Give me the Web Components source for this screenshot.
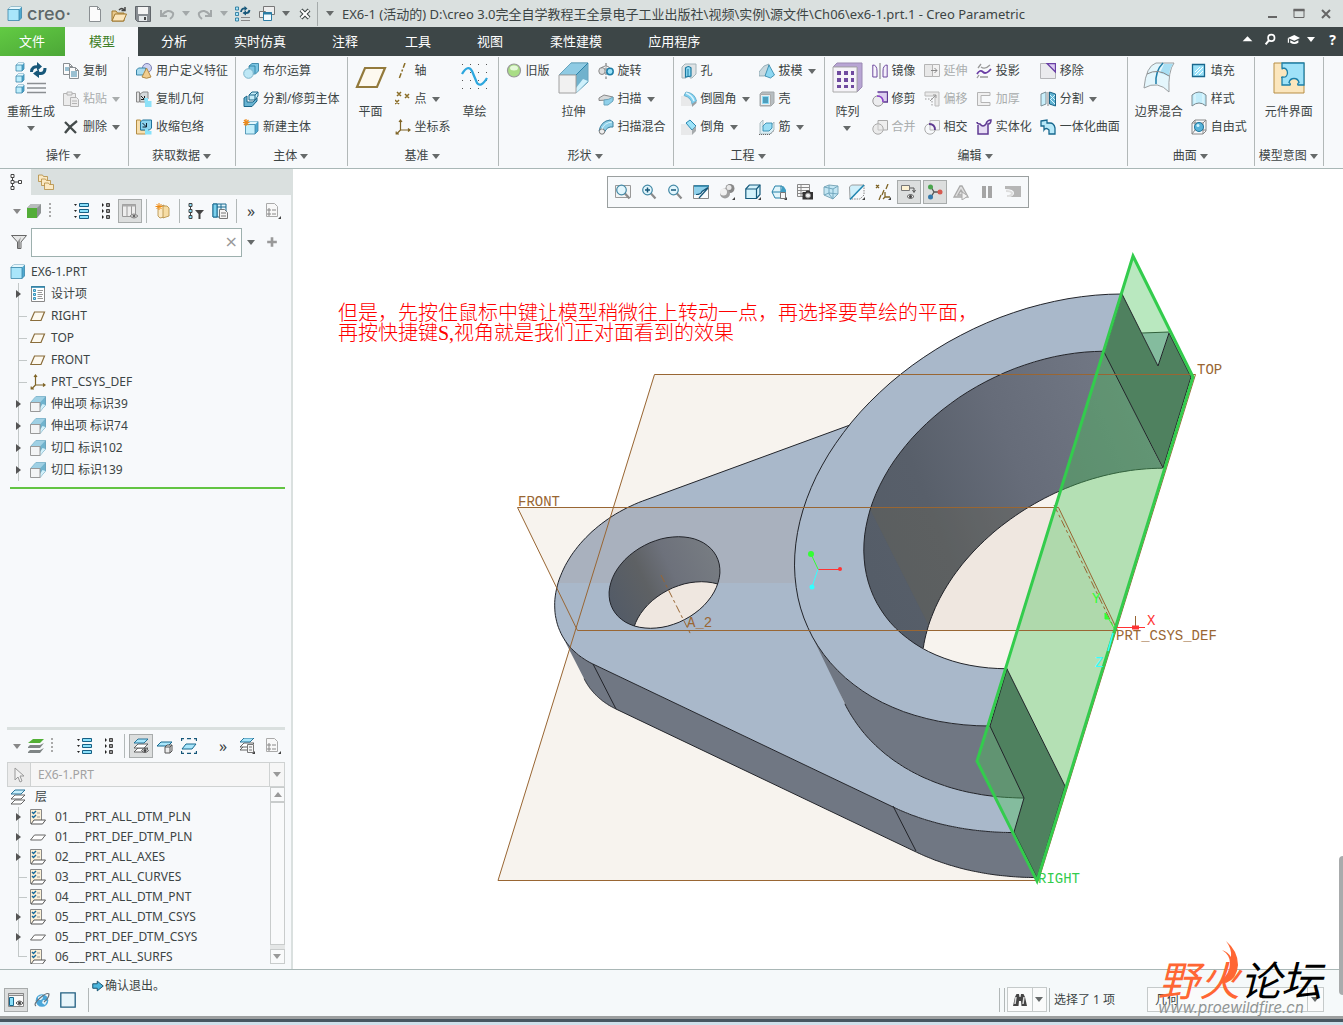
<!DOCTYPE html>
<html lang="zh-CN">
<head>
<meta charset="utf-8">
<title>EX6-1 - Creo Parametric</title>
<style>
  html, body {
    margin: 0;
    height: 100%;
  }

  body {
    font: 12px/16px "Noto Sans", "Noto Sans CJK SC", sans-serif;
    color: #3c4444;
    background: #fff;
    overflow: hidden;
  }
</style>
</head>
<body>
<creo-app></creo-app>

<script>
// small building blocks shared by several icons
const cube = (x, y, s, d, front = '#bdeefc', stroke = '#3a87aa') => `
  <path d="M${x} ${y + d}l${d} ${-d}h${s}v${s}l${-d} ${d}z" fill="#4fa9d0" stroke="${stroke}" stroke-width=".8"/>
  <path d="M${x} ${y + d}l${d} ${-d}h${s}l${-d} ${d}z" fill="#e6f8fd"/>
  <path d="M${x} ${y + d}h${s}v${s}h${-s}z" fill="${front}" stroke="${stroke}" stroke-width=".8"/>`;
const extrude = `
  <path d="M.5 6.500L6 .5H15.500V9L10 15.500V6.500z" fill="#6fb3ce" stroke="#5c98b2" stroke-width=".8"/>
  <path d="M6 .5h9.500L10 6.500H.5z" fill="#9fd0e4"/>
  <path d="M10 15.500L15.500 9l-3-1-2.500 4z" fill="#d2f1fb"/>
  <path d="M.5 6.500h9.500v9H.5z" fill="#f3f4f5" stroke="#999"/>`;
const sheet = (x, y, w, h) => `
  <path d="M${x} ${y}h${w - 3}l3 3v${h - 3}h${-w}z" fill="#fbfbfb" stroke="#8a8f92"/>
  <path d="M${x + w - 3} ${y}v3h3" fill="none" stroke="#8a8f92"/>`;
const layer = (y, fill, stroke) =>
  `<path d="M1 ${y + 4}l4-4h10l-4 4z" fill="${fill}" stroke="${stroke}" stroke-width=".9"/>`;
const csys = '<path d="M5.500 1v10H15M5.500 11L1.500 15M4 3l1.500-2L7 3M13 9.500l2 1.500-2 1.500M1.200 12.500V15H4" fill="none" stroke="#7f6426" stroke-width="1.200"/>';
const eye = (x, y) => `
  <path d="M${x} ${y}q3.500-4 7 0q-3.500 4-7 0z" fill="#f4f4f4" stroke="#555"/>
  <circle cx="${x + 3.500}" cy="${y}" r="1.500" fill="#444"/>`;
const corner = '<path d="M16 13v3h-3z" fill="#444"/>';
const magnifier = '<path d="M9.500 9l5 5.500" stroke="#8b8b8b" stroke-width="2.200"/><circle cx="6.500" cy="6" r="4.800" fill="#e2f6fd" stroke="#4489a6" stroke-width="1.200"/>';

const ICONS = {
  cube: cube(1, 1, 11, 2.500, '#a9e6fb'),
  new: sheet(2.500, .5, 11, 15),
  open: '<path d="M1 15V5h4l1.500 2H13v8z" fill="#e9c98d" stroke="#a0792f"/><path d="M1 15l3-7h11.500l-3 7z" fill="#fbe6bd" stroke="#a0792f"/><path d="M8 4q3-3 5 0M14 1v3.500h-3.500" fill="none" stroke="#444" stroke-width="1.500"/>',
  save: '<path d="M.5 .5h15v15H2.500l-2-2z" fill="#888d92" stroke="#61666b"/><path d="M3 1h10v7H3z" fill="#f4f4f4"/><path d="M4 10h8v5H4z" fill="#e4e8ea"/><path d="M9 11h2v3H9z" fill="#444"/>',
  undo: '<path d="M2 4v6h6" fill="none" stroke="#a3a8a9" stroke-width="2"/><path d="M3 9Q9 2 14 7q1 3-3 6" fill="none" stroke="#a3a8a9" stroke-width="2"/>',
  redo: '<path d="M14 4v6H8" fill="none" stroke="#a3a8a9" stroke-width="2"/><path d="M13 9Q7 2 2 7q-1 3 3 6" fill="none" stroke="#a3a8a9" stroke-width="2"/>',
  regen: `<g fill="#a9e6fb" stroke="#1a6f96" stroke-width=".8"><path d="M.5 1h3v3h-3zM.5 6.500h3v3h-3zM.5 12h3v3h-3z"/></g>
    <path d="M6 6Q6.500 2 10 2.500M14.500 4Q14 7.500 10 7" fill="none" stroke="#17587a" stroke-width="1.800"/><path d="M9.500 0v5l3-2.500zM11 4.500v5L7.500 7z" fill="#17587a"/>
    <path d="M6 11.500h9M6 14.500h9" stroke="#888" stroke-width="1.200"/>`,
  regenBig: `${cube(1, 1, 6, 2)}${cube(1, 12, 6, 2)}${cube(1, 23, 6, 2)}
    <path d="M16.500 10q0-6 7-5M30 6q0 7-7 5" fill="none" stroke="#17587a" stroke-width="3"/><path d="M22 0v9l5-4.500zM24 7v9l-6-4.500z" fill="#17587a"/>
    <path d="M12 21.500h19M12 26h19M12 30.500h19" stroke="#8b8f92" stroke-width="1.500"/>`,
  windows: '<path d="M4.500 .5h11v8h-11zM.5 5.500h6v6h-6z" fill="#eee" stroke="#777"/><path d="M4.500 6.500h8v8h-8z" fill="#f3fbff" stroke="#2b7ca4"/><path d="M4 7.500h9" stroke="#2b7ca4" stroke-width="2"/>',
  closeWin: '<path d="M4 4l8 8M12 4l-8 8" stroke="#3c4444" stroke-width="4"/><path d="M4.200 4.200l7.600 7.600M11.800 4.200l-7.600 7.600" stroke="#fff" stroke-width="2"/>',
  copy: `${sheet(.5, .5, 9, 11)}${sheet(6.500, 4.500, 9, 11)}<path d="M8 9h6M8 11h6M8 13h6M2 5h4M2 7h4" stroke="#3b86a8"/>`,
  paste: '<g fill="#ececec" stroke="#b4b4b4"><path d="M.5 2.500h12v12H.5z"/><path d="M4 1h5v3H4z"/><path d="M7.500 6.500h6l2 2v7h-8z"/></g><path d="M9 10h5M9 12.500h5" stroke="#b4b4b4"/>',
  delete: '<path d="M2 3l11 11M14 2Q7 7 2 14" fill="none" stroke="#444b4b" stroke-width="2.300"/>',
  udf: '<circle cx="11" cy="5" r="4.500" fill="#cfd3f2" stroke="#7b80b4"/><path d="M.5 7l2-2h7v7h-9z" fill="#a8dcf0" stroke="#3a85a8"/><path d="M6 14L10.500 5 15 14q-4.500 2.500-9 0z" fill="#f1cd8e" stroke="#b08a46"/>',
  copyGeom: '<path d="M.5 1h3v10h-3z" fill="#e3e3e3" stroke="#888"/><path d="M4 3l3-2h5v7L9 11H4z" fill="#d5dadc" stroke="#888"/><path d="M5 5l3 3M8.500 5v3.500H5" fill="none" stroke="#222"/><path d="M8 7h4v3h3.500v6H9v-3z" fill="#8de1f8"/>',
  shrink: '<path d="M.5 1h4v10h5v4h-9z" fill="#f7dfae" stroke="#b38c43"/><path d="M4.500 3l2-2h9v8l-2 2h-9z" fill="#8bd3ee" stroke="#1f7299"/><path d="M6.500 4l4 4M10.500 4v4h-4" fill="none" stroke="#123"/><path d="M9 10h3v2h3.500v3.500H9z" fill="#86e2fb"/>',
  boolean: '<path d="M6 3l3-2.500h6.500V8l-3 3H6z" fill="#7cc5e2" stroke="#27789d" stroke-width=".8"/><path d="M6 3h6v7" fill="none" stroke="#27789d" stroke-width=".8"/><circle cx="5.500" cy="10.500" r="4.800" fill="#bde7f5" stroke="#7db4ca"/>',
  splitBody: '<path d="M1 7l3-2v6h6l4-4v3l-5 5.500H1z" fill="#68b3d1" stroke="#1a6688"/><path d="M6 4l3-3h6v4l-3 4H6z" fill="#c6edf9" stroke="#1a6688"/><path d="M6 4h6v5M12 4l3-3" fill="none" stroke="#1a6688"/>',
  newBody: `${cube(2.500, 2.500, 9.500, 3, '#c4effb')}<path d="M3 0v7M0 3.500h6.500M1 1l4.500 5M5.500 1L1 6" stroke="#ec8b1d" stroke-width="1.200"/>`,
  plane: '<path d="M.8 12.500L4.500 4h10L11 12.500z" fill="#fdf9ef" stroke="#8a6d3b" stroke-width="1.200"/>',
  planeBig: '<path d="M2 25L10 6h20l-8 19z" fill="#fdf9ef" stroke="#937a3c" stroke-width="2.200"/>',
  axis: '<path d="M10 0L4 16" stroke="#8a6d26" stroke-width="1.500" stroke-dasharray="5 2 2 2"/>',
  point: '<path d="M2 1l4 4M6 1L2 5M10 3l4 4M14 3l-4 4M0 9l4 4M4 9l-4 4" stroke="#8a6d26" stroke-width="1.500"/>',
  csys,
  sketchBig: '<g fill="#555"><path d="M3 2h1v1H3zM11 2h1v1h-1zM19 2h1v1h-1zM27 2h1v1h-1zM3 10h1v1H3zM11 10h1v1h-1zM19 10h1v1h-1zM27 10h1v1h-1zM3 18h1v1H3zM11 18h1v1h-1zM19 18h1v1h-1zM27 18h1v1h-1zM3 26h1v1H3zM11 26h1v1h-1zM19 26h1v1h-1zM27 26h1v1h-1z"/></g><path d="M3 12Q9 2 13 9L18 21q4 5 10-5" fill="none" stroke="#2da7de" stroke-width="2.300"/>',
  legacy: '<circle cx="8" cy="7.500" r="6.500" fill="#a9dd86" stroke="#999" stroke-width="1.200"/><ellipse cx="8" cy="5" rx="4" ry="2.500" fill="#e4f8d8"/>',
  extrude,
  extrudeBig: '<path d="M1 13L13 1h17v19L18 31V13z" fill="#70b2cd" stroke="#6aa5bd"/><path d="M13 1h17L18 13H1z" fill="#8fcbe4" stroke="#6aa5bd"/><path d="M18 31L30 19l-5-2-7 9z" fill="#cff1fc"/><path d="M1 13h17v18H1z" fill="#f1f1f1" stroke="#a0a0a0"/><path d="M18 13L30 1" stroke="#2b83aa"/>',
  revolve: '<path d="M8 0v16" stroke="#666" stroke-dasharray="3 1.500"/><ellipse cx="4" cy="8" rx="3.200" ry="3.500" fill="#ddd" stroke="#888"/><circle cx="12" cy="8.500" r="3.200" fill="#9be3fa" stroke="#1f7da6" stroke-width="1.500"/><path d="M3 5q5-4 9 0" fill="none" stroke="#888"/>',
  sweep: '<path d="M1 7l5-3 9 2v3l-6 3V9L1 9.500z" fill="#d6d9da" stroke="#888"/><path d="M6 9q5 0 9-3v4l-5 4H6z" fill="#8fd0ea" stroke="#6aa5bd"/>',
  sweepBlend: '<path d="M1 12Q3 2 12 1l3 2v5Q9 7 6 14z" fill="#8ecfe8" stroke="#3a7e9d"/><circle cx="4" cy="12.500" r="2.700" fill="#eee" stroke="#777"/><path d="M4 10Q6 4 14 3" fill="none" stroke="#d9f5fd"/>',
  hole: '<path d="M1 4l3-3h11v10l-4 4H9V7H5v8H1z" fill="#dfe3e5" stroke="#a3b4ba"/><path d="M4.500 14V5q3-3 5.500 0v8z" fill="#8edbf5" stroke="#1b789f" stroke-width="1.200"/><path d="M7 6v8" stroke="#1b789f"/>',
  round: '<path d="M0 5h7q4 3 4 10H0z" fill="#e8e9ea"/><path d="M5 1q9 1 10.500 9L11 13.500Q11 7 3 4.500z" fill="#7ecff0" stroke="#5ba6c4" stroke-width=".8"/><path d="M5 2q6 2 8 8" fill="none" stroke="#dff6fd" stroke-width="1.500"/><path d="M11 13v3l4.500-4v-2z" fill="#9a9fa2"/>',
  chamfer: '<path d="M0 5h5l6 6v5H0z" fill="#e8e9ea"/><path d="M5 4l4-3 6 6-4 4z" fill="#9de3f9" stroke="#2887b1"/><path d="M11 11v5l4-4V7z" fill="#a7abad"/>',
  draft: '<path d="M0 9l5-6 5-2v11l-5 1H0z" fill="#c8d9df" stroke="#7a99a5" stroke-width=".7"/><path d="M6 13l4-11 5.500 10-4 3z" fill="#8cd7f2" stroke="#2a81a6" stroke-width=".8"/>',
  shell: '<path d="M1 3l2-2h12v11l-3 3H1z" fill="#b7bdc0" stroke="#a3a8aa"/><path d="M1.500 3.500h10v11h-10z" fill="#ebedee" stroke="#aaa"/><path d="M3.500 5.500h6v7h-6z" fill="#4e9ebd" stroke="#8edbf5"/>',
  rib: '<path d="M1 4l3-3v7h7l4-5v8l-4 4H1z" fill="#dceef4" stroke="#9fb0b6" stroke-width=".8"/><path d="M4 7l3-3h6v5l-3 3H4z" fill="#9adef5" stroke="#2580a7" stroke-width=".8"/><path d="M0 15.500h11l4-4" fill="none" stroke="#666" stroke-dasharray="1 1"/>',
  patternBig: '<path d="M1 5l4-4h25v24l-5 5V5z" fill="#b8a5d4" stroke="#9b8ab3"/><path d="M1 5h24v25H1z" fill="#f5f3f8" stroke="#aaa"/><g fill="#6f4a9f"><path d="M5 9h4v4H5zM12 9h4v4h-4zM19 9h3v4h-3zM5 16h4v4H5zM12 16h4v4h-4zM19 16h3v4h-3zM5 23h4v3H5zM12 23h4v3h-4zM19 23h3v3h-3z"/></g>',
  mirror: '<path d="M8 0v16" stroke="#777"/><path d="M.8 2q4.200 0 4.200 6v6H.8z" fill="#f8f5fc" stroke="#6f4a9f"/><path d="M15.200 2Q11 2 11 8v6h4.200z" fill="#f4effb" stroke="#6f4a9f"/>',
  trim: '<path d="M5.500 1h10v10H10" fill="#ddd0f0" stroke="#5f3a92" stroke-width="1.300"/><circle cx="6" cy="10" r="5.200" fill="#ececee" stroke="#999"/><path d="M5 5q6 0 6 6" fill="none" stroke="#8b3fd0" stroke-width="1.500"/>',
  merge: '<path d="M6 1.500h9.500V11H6z" fill="#eee" stroke="#aaa"/><circle cx="6" cy="10" r="5.200" fill="#ebebeb" stroke="#aaa"/><path d="M6 11V5M6 11h5" stroke="#c4c4c4"/>',
  extend: '<path d="M.5 1.500h8v12h-8z" fill="#e8e8e8" stroke="#b5b5b5"/><path d="M8.500 1.500h7v12h-7z" fill="#f2f2f2" stroke="#b5b5b5"/><path d="M7 7.500h6M10.500 5L13 7.500 10.500 10" fill="none" stroke="#888"/>',
  offset: '<path d="M1 1h14v14h-4V5H1z" fill="#e9e9e9" stroke="#bbb"/><path d="M1 8h7v8" fill="none" stroke="#999" stroke-dasharray="1.500 1.500"/><path d="M6 10l6-6M9 4h3v3" fill="none" stroke="#999"/>',
  intersect: '<path d="M6 1.500h9.500V11H6z" fill="#f4f4f5" stroke="#bbb"/><circle cx="6" cy="10" r="5.200" fill="none" stroke="#aaa"/><path d="M5 5q6 0 6 6" fill="none" stroke="#5f3a92" stroke-width="1.800"/>',
  project: '<path d="M2 5l3-4M5 4q4 3 9-2" fill="none" stroke="#999" stroke-width="1.300"/><path d="M1 11q3-5 6-2t8-3" fill="none" stroke="#6b3fa5" stroke-width="1.800"/><path d="M1 15l2-3M4 14h8" fill="none" stroke="#999" stroke-width="1.300"/>',
  thicken: '<path d="M1.500 1.500H14v3H5v7h9v3H1.500z" fill="#f0f0f0" stroke="#b4b4b4"/>',
  solidify: '<path d="M2 6v9h10V5q3 0 3-4-4 0-5 4-3 4-6 0-3 0-3-2" fill="#e7ddf4" stroke="#5f3a92" stroke-width="1.500"/>',
  remove: '<path d="M.5 .5h15v15H.5z" fill="#ebebee" stroke="#b5b5b8"/><path d="M7 .5h8.500V9z" fill="#d9c9f0" stroke="#6a3fa5" stroke-width="1.300"/>',
  split: '<path d="M1 3l5-2v12l-5 2z" fill="#c9effb" stroke="#7a8f97"/><path d="M8 1v14" stroke="#888"/><path d="M9.500 1l6 2v12l-6-2z" fill="#5fb3d3" stroke="#1c6486"/><path d="M10 4l5 5M10 8l5 5M15 4l-5 5" stroke="#d8f4fc"/>',
  unified: '<path d="M1 2l6-1v3h3q4 0 5 5v6H9v-4q-3-3-5 0v-4H1z" fill="#b7e9f9" stroke="#17688e" stroke-width="1.300"/>',
  boundaryBig: '<path d="M1 26Q3 4 13 1h18Q25 9 26 30 15 18 1 26z" fill="#e4f6fc" stroke="#9a9fa1"/><path d="M21 2h9q-4 6-4 12l-9-3z" fill="#a8dff4"/><path d="M20 1Q12 9 13 22" fill="none" stroke="#1f7ea8" stroke-width="1.500"/><path d="M4 12q11-6 22 2" fill="none" stroke="#888"/>',
  fill: '<path d="M1.500 1.500h12v12h-12z" fill="#9be2f9" stroke="#19678d" stroke-width="1.300"/><path d="M4 9l5-5M4 12l8-8M8 12l4-4" stroke="#fff"/>',
  style: '<path d="M1 4q7-6 14 0v11q-7-6-14 0z" fill="#c2edfb" stroke="#7b898f"/><path d="M4 3v9M12 3v9" stroke="#e9fafe"/>',
  freestyle: '<path d="M1 4l3-3h11v11l-3 3H1zM1 4h11v11M12 4l3-3M4 1v10l-3 4M4 11h11" fill="none" stroke="#888"/><circle cx="8" cy="8" r="4.500" fill="#58b3d9" stroke="#1e789f"/><circle cx="7" cy="6.500" r="1.500" fill="#d3f3fd"/>',
  interfaceBig: '<path d="M1 1h30v30H1z" fill="#fbe6bd" stroke="#b78e45"/><path d="M9 1h22v22h-6q-1-1 1-2.500-1-4-5-4t-5 4q2 1.500 1 2.500H9v-7q-1-1 .5-1 4.500 1 5-4 0-5-5-5Q9 8 9 6z" fill="#9fe2f8" stroke="#1b7fa9" stroke-width="1.300"/>',
  treeTab: '<path d="M3.500 3v10M3.500 8h7" stroke="#444"/><g fill="#fff" stroke="#444"><path d="M2 .5h3v3H2zM2 6.500h3v3H2zM2 12.500h3v3H2zM9.500 6.500h3v3h-3z"/></g>',
  folders: '<g fill="#fbe9c4" stroke="#b28a3f" stroke-width=".8"><path d="M.5 1h4l1 1.500h4v5h-9z"/><path d="M3.500 5h4l1 1.500h4v5h-9z"/><path d="M6.500 9h4l1 1.500h4v5h-9z"/></g>',
  cubeGreen: '<path d="M1 5l4-4h10v9l-4 5V5z" fill="#8d9292"/><path d="M1 5l4-4h10l-4 4z" fill="#b8bcbc"/><path d="M1 5h10v10H1z" fill="#53ad38"/>',
  layersGreen: '<path d="M0 5l5-4h11l-4 4z" fill="#52b035"/><path d="M0 9l2-2h10l4-2-4 5H0zM0 14l2-2h10l4-2-4 5H0z" fill="#7f8585"/>',
  dots: '<path d="M7 0h2v2H7zM7 4h2v2H7zM7 8h2v2H7zM7 12h2v2H7z" fill="#aaa"/>',
  expandAll: '<g fill="#8be0fa" stroke="#165f84"><path d="M5.500 .5h9v3h-9zM5.500 6.500h9v3h-9zM5.500 12.500h9v3h-9z"/></g><path d="M0 1h3L1.500 3zM0 7h3L1.500 9zM0 13h3l-1.500 2z" fill="#222"/>',
  collapseAll: '<g fill="#999" stroke="#444"><path d="M8.500 .5h3v3h-3zM8.500 6.500h3v3h-3zM8.500 12.500h3v3h-3z"/></g><path d="M4 0v4l2-2zM4 6v4l2-2zM4 12v4l2-2z" fill="#222"/>',
  columns: '<path d="M.5 1.500h13v12H.5zM5 1v12M9.500 1v12" fill="#ededed" stroke="#999"/><path d="M.5 1.500h13v2H.5z" fill="#aaa"/><path d="M8 13q3.500-4 8 0-4 4-8 0z" fill="#ccc" stroke="#888"/><circle cx="12" cy="13" r="1.300" fill="#666"/>',
  newPart: '<path d="M3 4l6-2v12l-4 1-2-2z" fill="#fbe9c4" stroke="#b28a3f" stroke-width=".8"/><path d="M8 3q5-1 6 2v8l-6 2z" fill="#f6dca4" stroke="#b28a3f" stroke-width=".8"/><path d="M4 0v7M.5 3.500h7M1.500 1l5 5M6.500 1l-5 5" stroke="#ef8a12"/>',
  treeFilter: '<path d="M2.500 3v10" stroke="#444"/><g fill="#8be0fa" stroke="#444"><path d="M1 .5h3v3H1zM1 6.500h3v3H1zM1 12.500h3v3H1z"/></g><path d="M7 7h9l-3.500 4v5h-2v-5z" fill="#444"/>',
  treeColumns: '<path d="M1 1h13v13H1zM5 1v13M1 4h13M9 1v5" fill="#e4f6fc" stroke="#1a6b90"/><path d="M1 1h4v13H1z" fill="#7bd0ec" stroke="#1a6b90"/><path d="M7.500 6.500h5l3 3v6h-8z" fill="#f5f5f5" stroke="#777"/><path d="M9 10h5M9 13h5" stroke="#777"/>',
  settings: `<path d="M1.500 .5h8l3 3v10h-11z" fill="#f8f8f8" stroke="#aaa"/><path d="M3 6h2v2H3zM3 10h2v2H3zM7 7h4M7 11h4" fill="none" stroke="#888"/>${corner}`,
  funnel: '<path d="M.5 1.500h15L10 8v6.500H6.500V8z" fill="#e6e7e7" stroke="#666"/><path d="M10 3l-3 4v7l2 0V7z" fill="#999"/>',
  plus: '<path d="M8 2.500v11M2.500 8h11" stroke="#999" stroke-width="3"/>',
  designItems: '<path d="M1.500 .5h13v15h-13z" fill="#fff" stroke="#888"/><path d="M1 1h14" stroke="#1d7fab" stroke-width="1.500"/><g fill="#8be0fa" stroke="#1a7ca8" stroke-width=".8"><path d="M3.500 3.500h2v2h-2zM3.500 7.500h2v2h-2zM3.500 11.500h2v2h-2z"/></g><path d="M7.500 4.500H13M7.500 6.500H12M7.500 8.500H13M7.500 10.500H12M7.500 12.500H13" stroke="#999"/>',
  layers: layer(11, '#fff', '#555') + layer(6, '#fff', '#555') + layer(1, '#c8effc', '#17688e'),
  layerRule: '<path d="M.5 .5h11v14H.5z" fill="#fbf1d8" stroke="#888"/><path d="M2 3l1.500 1.500L6 2M2 7l1.500 1.500L6 6" fill="none" stroke="#14689b" stroke-width="1.400"/><path d="M7 4h3M7 8h3" stroke="#999"/><path d="M1 15l3-4h11.500l-3 4z" fill="#fff" stroke="#555"/>',
  layerPlain: '<path d="M.5 11l4-5h11l-4 5z" fill="#fff" stroke="#666"/>',
  layersEye: `${layer(10, '#fff', '#555')}${layer(6, '#fff', '#555')}${layer(1, '#a9e6fb', '#17688e')}${eye(8.500, 12.500)}`,
  layerCube: '<path d="M0 8l4-4h11l-4 4z" fill="#a9e6fb" stroke="#17688e"/><path d="M8 9l2-2h5v6l-2 2H8zM8 9h5v6M13 9l2-2" fill="#ececec" stroke="#555"/>',
  layerSelect: '<path d="M.5 3V.5H3M6 .5h4M13 .5h2.500V3M.5 13v2.500H3M6 15.500h4M13 15.500h2.500V13" fill="none" stroke="#17587a" stroke-width="1.300"/><path d="M1 11l4-5h10l-4 5z" fill="#a9e6fb" stroke="#17688e"/>',
  layerMenu: `${layer(8, '#fff', '#555')}${layer(5, '#fff', '#555')}${layer(0, '#a9e6fb', '#17688e')}<path d="M8.500 6.500h6v8h-6z" fill="#f6f6f6" stroke="#777"/><path d="M10 9h3M10 12h3" stroke="#777"/>${corner}`,
  pointer: '<path d="M4 1v12l3-3 2 5 2-1-2-5h4z" fill="#f2f2f2" stroke="#999"/>',
  zoomFit: `<path d="M.5 1.500h15v12H.5z" fill="#f3f4f4" stroke="#999"/>${magnifier}`,
  zoomIn: `${magnifier}<path d="M6.500 3.500v5M4 6h5" stroke="#17587a" stroke-width="1.500"/>`,
  zoomOut: `${magnifier}<path d="M4 6h5" stroke="#17587a" stroke-width="1.500"/>`,
  repaint: '<path d="M.5 1.500h15v13H.5z" fill="#8fd0ea" stroke="#888"/><path d="M1 14v-3q6 0 8-3l6-4v10z" fill="#fafcfd"/><path d="M3 10.500q5 0 6-3l6-4M6 14l9-10" fill="none" stroke="#17587a" stroke-width="1.200"/><path d="M1 2h15" stroke="#2580a7" stroke-width="1.500"/>',
  shading: `<circle cx="11" cy="4.500" r="4.500" fill="#888"/><circle cx="6" cy="9.500" r="5" fill="#a0a0a0"/><circle cx="4.500" cy="8" r="3.500" fill="#f1f1f1"/><circle cx="10" cy="3.500" r="2.500" fill="#e8e8e8"/>${corner}`,
  displayStyle: `<path d="M.8 5l3.500-4H15v9.500l-3.500 4H.8z" fill="#d5f3fc" stroke="#175b7d" stroke-width="1.200"/><path d="M.8 5h10.700v9.500M11.500 5L15 1" fill="none" stroke="#175b7d" stroke-width="1.200"/>${corner}`,
  savedViews: `<path d="M1 8l3-6h7l3 6-3 6H4z" fill="#e1f5fb" stroke="#2580a7"/><path d="M1 8h9V2" fill="none" stroke="#2580a7"/><path d="M10 6l2.500-4L15 6v3h-5z" fill="#3f9ec4"/><path d="M9.500 8.500h5v6h-5z" fill="#f6f6f6" stroke="#777"/>${corner}`,
  viewManager: '<path d="M.5 .5h12v12H.5zM.5 3.500h12M.5 6.500h12M.5 9.500h12M4 .5v12" fill="#f7f7f7" stroke="#888"/><path d="M5.500 8h3l1-1.500h3L13.500 8H16v7.500H5.500z" fill="#333"/><circle cx="11" cy="11.500" r="2.500" fill="#eee" stroke="#888"/>',
  perspective: '<path d="M1 3l5-2 9 1v8l-5 5-9-4z" fill="#c3e6f3" stroke="#7fa9ba"/><path d="M1 3l9 2 5-3M10 5v10M6 1v9l4 5M1 11l5-2 9 1" fill="none" stroke="#73a8bf"/>',
  section: `<path d="M.5 3l2-2H15L1 15z" fill="#d0effa" stroke="#888" stroke-width=".8"/><path d="M15 1v10l-4 4H2" fill="none" stroke="#888" stroke-dasharray="1.500 1"/><path d="M15 1L1 15.500" stroke="#1f86b1" stroke-width="1.500"/>${corner}`,
  datumDisplay: `<path d="M1 1l3 3M4 1L1 4M13 0l-2 5M9 6l-2 5M6 11l-2 5M10 8v5h5M8 15l2-2" fill="none" stroke="#7f6426" stroke-width="1.300"/>${corner}`,
  annotations: `<path d="M.5 1.500h8v5h-8z" fill="#fdf2d3" stroke="#777"/><path d="M9 4h4v4M11.500 6l1.500 2.500L14.500 6" fill="none" stroke="#555"/>${eye(6, 12.500)}`,
  spinCenter: '<path d="M4 3l3 5-3 5M7 8h6" fill="none" stroke="#555" stroke-width="1.300"/><circle cx="3.500" cy="3" r="2.500" fill="#4aa54e"/><circle cx="13" cy="8" r="2.500" fill="#d65a50"/><circle cx="3.500" cy="13" r="2.500" fill="#3579ab"/>',
  simulate: '<path d="M1 13L7 2l2 0 6 11zM5 11l3-5 3 5z" fill="#e0e0e0" stroke="#aaa" stroke-width="1.300"/><path d="M9 8l6 4-6 4z" fill="#f3f3f3" stroke="#aaa"/>',
  pause: '<path d="M3 2h4v12H3zM9 2h4v12H9z" fill="#a5a5a5"/>',
  analysis: '<path d="M0 2h16v11H4q5-1 5-4 0-4-9-4z" fill="#b6b6b6"/><path d="M2 12q5 0 5-3-1-2-6-2" fill="none" stroke="#ddd" stroke-width="2"/>',
  navPane: `<path d="M.5 1.500h15v13H.5z" fill="#fafafa" stroke="#888"/><path d="M.5 1.500h15v2H.5z" fill="#ddd" stroke="#888"/><path d="M1.500 5.500h4v8h-4z" fill="#8be0fa" stroke="#17688e"/>${eye(8, 11)}`,
  browser: '<circle cx="8" cy="8.500" r="6.300" fill="#4aa6d8"/><path d="M4 5l4-2 1 3-2 2-3 0zM9 8l4 1-2 4-3-2z" fill="#e4f5fb"/><path d="M2 14Q-1 12 6 6t9-4q0 4-5 8" fill="none" stroke="#6a7278" stroke-width="1.200"/>',
  fullScreen: '<path d="M.8 .8h14.400v14.400H.8z" fill="#e7f5fa" stroke="#205f80" stroke-width="1.300"/>',
  message: '<path d="M1 5h6V1.500L15 8l-8 6.500V11H1z" fill="#4cb6dd" stroke="#16506d" stroke-width="1.300"/>',
  binoculars: '<path d="M1 14l2-9 1.500-3H7l.5 3h1L9 2h2.500L13 5l2 9h-5.500L9 9H7l-.5 5z" fill="#444"/><path d="M4 5l-1 7M12 5l-1 7" stroke="#ddd" stroke-width="1.500"/>',
  chevronUp: '<path d="M2 10l6-6 6 6z" fill="#fff"/>',
  search: '<circle cx="9" cy="6" r="4" fill="none" stroke="#fff" stroke-width="2"/><path d="M6 9l-4 5" stroke="#fff" stroke-width="2.500"/>',
  learn: '<path d="M1 6l8-3.500L16 6 9 9.500z" fill="#fff"/><path d="M4 9v3q5 3 10 0V9L9 11.500zM1 6.500h1.500V12H1z" fill="#fff"/>',
  minimize: '<path d="M4 11h9" stroke="#666" stroke-width="2"/>',
  maximize: '<path d="M3 3.500h10v8H3z" fill="none" stroke="#666"/><path d="M2.500 4h11" stroke="#666" stroke-width="2.500"/>',
  close: '<path d="M4 4l8 8M12 4l-8 8" stroke="#666" stroke-width="2"/>'
};

class BaseElement extends HTMLElement {
  connectedCallback() {
    if (!this.shadowRoot) {
      this.attachShadow({ mode: 'open' });
      this.shadowRoot.innerHTML = this.render();
    }
  }
}

class CreoIcon extends BaseElement {
  render() {
    const name = this.getAttribute('name');
    const box = name.endsWith('Big') ? 32 : 16;
    return `
      <style>
        :host { display: block; flex: none; width: ${box}px; height: ${box}px; }
        svg { display: block; width: 100%; height: 100%; }
      </style>
      <svg viewBox="0 0 ${box} ${box}" aria-hidden="true">${ICONS[name]}</svg>
    `;
  }
}

class CaretMark extends BaseElement {
  render() {
    return `
      <style>
        :host { display: block; flex: none; width: 9px; height: 5px; color: #666a6a; }
        div { border: 4px solid transparent; border-top: 5px solid currentColor; border-bottom: 0; width: 0; }
      </style>
      <div></div>
    `;
  }
}

// Icon-only button used by every toolbar
class IconButton extends BaseElement {
  render() {
    return `
      <style>
        :host { display: block; flex: none; width: var(--button-width, 24px); }
        button {
          display: flex;
          align-items: center;
          justify-content: center;
          box-sizing: border-box;
          width: 100%;
          height: 24px;
          padding: 0;
          border: 1px solid transparent;
          background: none;
        }
        :host([pressed]) button { background: #dcdede; border-color: #a8acac; }
      </style>
      <button type="button" aria-label="${this.getAttribute('icon')}"><creo-icon name="${this.getAttribute('icon')}"></creo-icon></button>
    `;
  }
}

class RibbonButton extends BaseElement {
  render() {
    const menu = this.hasAttribute('menu') ? '<caret-mark></caret-mark>' : '';
    return `
      <style>
        :host { display: block; }
        button {
          display: flex;
          align-items: center;
          height: 28px;
          padding: 0;
          border: 0;
          background: none;
          color: inherit;
          font: inherit;
          white-space: nowrap;
        }
        creo-icon { margin-right: 4px; }
        caret-mark { margin-left: 5px; }
        button:disabled, button:disabled caret-mark { color: #a9adad; }
        :host([big]) button {
          flex-direction: column;
          min-width: 32px;
          height: 84px;
          padding-top: 5px;
        }
        :host([big]) creo-icon { margin: 0 0 10px; }
        :host([big]) caret-mark { margin: 6px 0 0; }
      </style>
      <button type="button" ${this.hasAttribute('disabled') ? 'disabled' : ''}>
        <creo-icon name="${this.getAttribute('icon')}"></creo-icon><span><slot></slot></span>${menu}
      </button>
    `;
  }
}

class RibbonColumn extends BaseElement {
  render() {
    return `
      <style>:host { display: flex; flex-direction: column; }</style>
      <slot></slot>
    `;
  }
}

class RibbonGroup extends BaseElement {
  render() {
    return `
      <style>
        :host { display: flex; flex: none; flex-direction: column; margin: 1px 0 2px; border-right: 1px solid #b2b8b8; }
        .body { display: flex; justify-content: center; gap: 8px; height: 84px; padding: 0 7px; }
        .label {
          display: flex;
          align-items: center;
          justify-content: center;
          gap: 3px;
          height: 16px;
          margin-top: 7px;
          padding: 0 4px;
          border: 0;
          background: none;
          color: inherit;
          font: inherit;
        }
      </style>
      <div class="body"><slot></slot></div>
      <button type="button" class="label">${this.getAttribute('label')}<caret-mark></caret-mark></button>
    `;
  }
}

class CreoRibbon extends BaseElement {
  render() {
    return `
      <style>
        :host {
          display: flex;
          flex: none;
          box-sizing: border-box;
          height: 113px;
          border-bottom: 1px solid #a9b7b6;
          background: #f7f9fb;
        }
      </style>
      <ribbon-group label="操作">
        <ribbon-button big menu icon="regenBig">重新生成</ribbon-button>
        <ribbon-column>
          <ribbon-button icon="copy">复制</ribbon-button>
          <ribbon-button icon="paste" menu disabled>粘贴</ribbon-button>
          <ribbon-button icon="delete" menu>删除</ribbon-button>
        </ribbon-column>
      </ribbon-group>
      <ribbon-group label="获取数据">
        <ribbon-column>
          <ribbon-button icon="udf">用户定义特征</ribbon-button>
          <ribbon-button icon="copyGeom">复制几何</ribbon-button>
          <ribbon-button icon="shrink">收缩包络</ribbon-button>
        </ribbon-column>
      </ribbon-group>
      <ribbon-group label="主体">
        <ribbon-column>
          <ribbon-button icon="boolean">布尔运算</ribbon-button>
          <ribbon-button icon="splitBody">分割/修剪主体</ribbon-button>
          <ribbon-button icon="newBody">新建主体</ribbon-button>
        </ribbon-column>
      </ribbon-group>
      <ribbon-group label="基准">
        <ribbon-button big icon="planeBig">平面</ribbon-button>
        <ribbon-column>
          <ribbon-button icon="axis">轴</ribbon-button>
          <ribbon-button icon="point" menu>点</ribbon-button>
          <ribbon-button icon="csys">坐标系</ribbon-button>
        </ribbon-column>
        <ribbon-button big icon="sketchBig">草绘</ribbon-button>
      </ribbon-group>
      <ribbon-group label="形状">
        <ribbon-column>
          <ribbon-button icon="legacy">旧版</ribbon-button>
        </ribbon-column>
        <ribbon-button big icon="extrudeBig">拉伸</ribbon-button>
        <ribbon-column>
          <ribbon-button icon="revolve">旋转</ribbon-button>
          <ribbon-button icon="sweep" menu>扫描</ribbon-button>
          <ribbon-button icon="sweepBlend">扫描混合</ribbon-button>
        </ribbon-column>
      </ribbon-group>
      <ribbon-group label="工程">
        <ribbon-column>
          <ribbon-button icon="hole">孔</ribbon-button>
          <ribbon-button icon="round" menu>倒圆角</ribbon-button>
          <ribbon-button icon="chamfer" menu>倒角</ribbon-button>
        </ribbon-column>
        <ribbon-column>
          <ribbon-button icon="draft" menu>拔模</ribbon-button>
          <ribbon-button icon="shell">壳</ribbon-button>
          <ribbon-button icon="rib" menu>筋</ribbon-button>
        </ribbon-column>
      </ribbon-group>
      <ribbon-group label="编辑">
        <ribbon-button big menu icon="patternBig">阵列</ribbon-button>
        <ribbon-column>
          <ribbon-button icon="mirror">镜像</ribbon-button>
          <ribbon-button icon="trim">修剪</ribbon-button>
          <ribbon-button icon="merge" disabled>合并</ribbon-button>
        </ribbon-column>
        <ribbon-column>
          <ribbon-button icon="extend" disabled>延伸</ribbon-button>
          <ribbon-button icon="offset" disabled>偏移</ribbon-button>
          <ribbon-button icon="intersect">相交</ribbon-button>
        </ribbon-column>
        <ribbon-column>
          <ribbon-button icon="project">投影</ribbon-button>
          <ribbon-button icon="thicken" disabled>加厚</ribbon-button>
          <ribbon-button icon="solidify">实体化</ribbon-button>
        </ribbon-column>
        <ribbon-column>
          <ribbon-button icon="remove">移除</ribbon-button>
          <ribbon-button icon="split" menu>分割</ribbon-button>
          <ribbon-button icon="unified">一体化曲面</ribbon-button>
        </ribbon-column>
      </ribbon-group>
      <ribbon-group label="曲面">
        <ribbon-button big icon="boundaryBig">边界混合</ribbon-button>
        <ribbon-column>
          <ribbon-button icon="fill">填充</ribbon-button>
          <ribbon-button icon="style">样式</ribbon-button>
          <ribbon-button icon="freestyle">自由式</ribbon-button>
        </ribbon-column>
      </ribbon-group>
      <ribbon-group label="模型意图">
        <ribbon-button big icon="interfaceBig">元件界面</ribbon-button>
      </ribbon-group>
    `;
  }
}

class TitleBar extends BaseElement {
  render() {
    return `
      <style>
        :host {
          display: flex;
          flex: none;
          align-items: center;
          height: 27px;
          padding: 0 9px 0 7px;
          background: #dae0df;
        }
        .logo { margin-left: 4px; font: 500 18px/24px Inter, sans-serif; width: 60px; color: #5e686a; }
        .quick { display: flex; align-items: center; gap: 8px; }
        .quick caret-mark { width: 7px; margin-left: -1px; }
        .quick .off { color: #a3a8a9; }
        .sep { width: 1px; height: 24px; margin: 0 8px 0 4px; background: #a5abab; }
        .title { flex: 1; margin-left: 7px; font-size: 13px; white-space: nowrap; }
        .window { display: flex; gap: 11px; }
        icon-button { --button-width: 16px; }
      </style>
      <creo-icon name="cube"></creo-icon>
      <span class="logo">creo·</span>
      <div class="quick">
        <icon-button icon="new"></icon-button>
        <icon-button icon="open"></icon-button>
        <icon-button icon="save"></icon-button>
        <icon-button icon="undo"></icon-button><caret-mark class="off"></caret-mark>
        <icon-button icon="redo"></icon-button><caret-mark class="off"></caret-mark>
        <icon-button icon="regen"></icon-button>
        <icon-button icon="windows"></icon-button><caret-mark></caret-mark>
        <icon-button icon="closeWin"></icon-button>
      </div>
      <div class="sep"></div>
      <caret-mark></caret-mark>
      <span class="title">EX6-1 (活动的) D:\\creo 3.0完全自学教程王全景电子工业出版社\\视频\\实例\\源文件\\Ch06\\ex6-1.prt.1 - Creo Parametric</span>
      <div class="window">
        <creo-icon name="minimize"></creo-icon>
        <creo-icon name="maximize"></creo-icon>
        <creo-icon name="close"></creo-icon>
      </div>
    `;
  }
}

class MenuTabs extends BaseElement {
  render() {
    const tabs = ['分析', '实时仿真', '注释', '工具', '视图', '柔性建模', '应用程序'];
    return `
      <style>
        :host { display: flex; flex: none; height: 29px; background: #3d4647; font-size: 13px; }
        button { padding: 0 23px 2px; border: 0; background: none; color: #fff; font: inherit; white-space: nowrap; }
        button:nth-of-type(even) { padding-left: 24px; }
        button.file { padding: 0 20px 2px 19px; background: linear-gradient(160deg, #62cb43, #4ca737); }
        button.active { background: #f7f9fb; color: #3f7f27; }
        .tools { display: flex; align-items: center; gap: 10px; margin-left: auto; padding: 0 4px 4px 0; color: #fff; }
        .tools creo-icon { width: 13px; height: 13px; }
        .tools caret-mark { margin-left: -3px; color: #fff; }
        .help { width: 13px; text-align: center; font-weight: bold; font-size: 14px; }
      </style>
      <button type="button" class="file">文件</button>
      <button type="button" class="active">模型</button>
      ${tabs.map(tab => `<button type="button">${tab}</button>`).join('')}
      <div class="tools">
        <creo-icon name="chevronUp"></creo-icon>
        <creo-icon name="search"></creo-icon>
        <creo-icon name="learn"></creo-icon>
        <caret-mark></caret-mark>
        <span class="help">?</span>
      </div>
    `;
  }
}

class TreeItem extends BaseElement {
  render() {
    return `
      <style>
        :host {
          display: grid;
          grid-template-columns: 30px var(--label-gap, 21px) auto;
          align-items: center;
          height: var(--row-height, 22px);
          white-space: nowrap;
        }
        .branch {
          align-self: stretch;
          display: flex;
          align-items: center;
          margin-left: 18px;
          border-left: 1px solid #c3c8c8;
        }
        .branch::before { content: ""; width: 8px; height: 1px; background: #c3c8c8; }
        :host([expandable]) .branch::before {
          width: 0;
          height: 0;
          margin-left: -3px;
          background: none;
          border: 4px solid transparent;
          border-left: 5px solid #555;
          border-right: 0;
        }
        :host([last]) .branch { align-self: start; height: 50%; align-items: flex-end; }
      </style>
      <span class="branch"></span>
      <creo-icon name="${this.getAttribute('icon')}"></creo-icon>
      <span><slot></slot></span>
    `;
  }
}

class ModelTree extends BaseElement {
  render() {
    const items = [
      ['设计项', 'designItems', true],
      ['RIGHT', 'plane'],
      ['TOP', 'plane'],
      ['FRONT', 'plane'],
      ['PRT_CSYS_DEF', 'csys'],
      ['伸出项 标识39', 'extrude', true],
      ['伸出项 标识74', 'extrude', true],
      ['切口 标识102', 'extrude', true],
      ['切口 标识139', 'extrude', true]
    ];
    return `
      <style>
        :host { display: block; flex: 1; min-height: 0; overflow: hidden; }
        .tabs { display: flex; align-items: center; height: 26px; background: #dae0df; }
        .tabs div { display: flex; align-items: center; height: 100%; padding: 0 7px; }
        .tabs .on { padding: 0 6px 0 9px; background: #f7f9fb; }
        .bar { display: flex; align-items: center; height: 32px; padding-left: 13px; }
        .bar .gap { width: 12px; }
        .bar .sep { width: 1px; height: 24px; margin: 0 4px; background: #b2b8b8; }
        .bar .more { width: 20px; text-align: center; font-size: 16px; }
        .bar creo-icon { margin-left: 4px; }
        .bar > caret-mark { color: #888; }
        .filter { display: flex; align-items: center; height: 30px; padding-left: 11px; }
        .box {
          display: flex;
          align-items: center;
          flex: 1;
          box-sizing: border-box;
          height: 29px;
          margin: 0 5px 0 4px;
          border: 1px solid #9db0ae;
          background: #fff;
        }
        input { flex: 1; min-width: 0; border: 0; outline: 0; font: inherit; background: none; }
        .clear { padding: 0 3px; border: 0; background: none; color: #999; font: 16px/16px "DejaVu Sans", sans-serif; }
        .filter > creo-icon:last-child { width: 14px; height: 14px; margin: 0 12px 0 9px; }
        .root { display: flex; align-items: center; gap: 5px; height: 22px; margin-top: 4px; padding-left: 10px; }
        .insert {
          height: 2px;
          margin: 6px 6px 0 10px;
          background: #62c443;
        }
      </style>
      <div class="tabs"><div class="on"><creo-icon name="treeTab"></creo-icon></div><div><creo-icon name="folders"></creo-icon></div></div>
      <div class="bar">
        <caret-mark></caret-mark>
        <creo-icon name="cubeGreen"></creo-icon>
        <creo-icon name="dots" style="margin-left: 0"></creo-icon>
        <span class="gap"></span>
        <icon-button icon="expandAll"></icon-button>
        <icon-button icon="collapseAll"></icon-button>
        <icon-button icon="columns" pressed></icon-button>
        <span class="sep"></span>
        <icon-button icon="newPart"></icon-button>
        <span class="sep"></span>
        <icon-button icon="treeFilter"></icon-button>
        <icon-button icon="treeColumns"></icon-button>
        <span class="sep"></span>
        <span class="more">»</span>
        <icon-button icon="settings"></icon-button>
      </div>
      <div class="filter">
        <creo-icon name="funnel"></creo-icon>
        <div class="box"><input type="text" aria-label="过滤"><button type="button" class="clear">×</button></div>
        <caret-mark></caret-mark>
        <creo-icon name="plus"></creo-icon>
      </div>
      <div class="root"><creo-icon name="cube"></creo-icon>EX6-1.PRT</div>
      ${items.map(([label, icon, open]) => `<tree-item icon="${icon}" ${open ? 'expandable' : ''}>${label}</tree-item>`).join('')}
      <div class="insert"></div>
    `;
  }
}

class LayerTree extends BaseElement {
  render() {
    const items = [
      ['01___PRT_ALL_DTM_PLN', 'layerRule', true],
      ['01___PRT_DEF_DTM_PLN', 'layerPlain', true],
      ['02___PRT_ALL_AXES', 'layerRule', true],
      ['03___PRT_ALL_CURVES', 'layerRule'],
      ['04___PRT_ALL_DTM_PNT', 'layerRule'],
      ['05___PRT_ALL_DTM_CSYS', 'layerRule', true],
      ['05___PRT_DEF_DTM_CSYS', 'layerPlain', true],
      ['06___PRT_ALL_SURFS', 'layerRule']
    ];
    return `
      <style>
        :host { display: block; flex: none; --row-height: 20px; --label-gap: 25px; }
        .splitter { height: 3px; margin: 0 6px 0 7px; background: #dae0df; }
        .bar { display: flex; align-items: center; height: 32px; padding-left: 13px; }
        .bar .gap { width: 13px; }
        .bar .sep { width: 1px; height: 24px; margin: 0 4px 0 3px; background: #b2b8b8; }
        .bar .more { width: 24px; margin-left: 10px; text-align: center; font-size: 16px; }
        .bar creo-icon { margin-left: 6px; }
        .bar > caret-mark { color: #888; }
        .bar icon-button:last-child { margin-left: 2px; }
        .combo { display: flex; box-sizing: border-box; height: 25px; margin: 0 6px 0 7px; border: 1px solid #cfd2d2; background: #f6f6f6; }
        .combo .pick { display: flex; align-items: center; padding: 0 3px; border-right: 1px solid #cfd2d2; background: #ececec; }
        select { flex: 1; padding: 0 0 0 7px; border: 0; appearance: none; background: none; color: #a2a2a2; opacity: 1; font: inherit; }
        .combo .drop { display: flex; align-items: center; padding: 0 2px 0 3px; border-left: 1px solid #cfd2d2; }
        .combo caret-mark { color: #999; }
        .view { display: flex; height: 177px; overflow: hidden; margin-bottom: 5px; }
        .list { flex: 1; }
        .root { display: flex; align-items: center; gap: 9px; height: 20px; padding-left: 10px; }
        .scroll { display: flex; flex-direction: column; width: 15px; margin-right: 6px; background: #e4e6e6; }
        .scroll div { box-sizing: border-box; border: 1px solid #c9cccc; background: #f9fafb; }
        .scroll .end { display: flex; align-items: center; justify-content: center; height: 15px; }
        .scroll .end:first-child caret-mark { transform: rotate(180deg); }
        .scroll .thumb { flex: 1; margin-bottom: 4px; }
        .scroll caret-mark { color: #999; }
      </style>
      <div class="splitter"></div>
      <div class="bar">
        <caret-mark></caret-mark>
        <creo-icon name="layersGreen"></creo-icon>
        <creo-icon name="dots" style="margin-left: 0"></creo-icon>
        <span class="gap"></span>
        <icon-button icon="expandAll"></icon-button>
        <icon-button icon="collapseAll"></icon-button>
        <span class="sep"></span>
        <icon-button icon="layersEye" pressed></icon-button>
        <icon-button icon="layerCube"></icon-button>
        <icon-button icon="layerSelect"></icon-button>
        <span class="more">»</span>
        <icon-button icon="layerMenu"></icon-button>
        <icon-button icon="settings"></icon-button>
      </div>
      <div class="combo">
        <span class="pick"><creo-icon name="pointer"></creo-icon></span>
        <select disabled aria-label="模型"><option>EX6-1.PRT</option></select>
        <span class="drop"><caret-mark></caret-mark></span>
      </div>
      <div class="view">
        <div class="list">
          <div class="root"><creo-icon name="layers"></creo-icon>层</div>
          ${items.map(([label, icon, open], i) => `<tree-item icon="${icon}" ${open ? 'expandable' : ''} ${i === items.length - 1 ? 'last' : ''}>${label}</tree-item>`).join('')}
        </div>
        <div class="scroll">
          <div class="end"><caret-mark></caret-mark></div>
          <div class="thumb"></div>
          <div class="end"><caret-mark></caret-mark></div>
        </div>
      </div>
    `;
  }
}

class ViewToolbar extends BaseElement {
  render() {
    const icons = ['zoomFit', 'zoomIn', 'zoomOut', 'repaint', 'shading', 'displayStyle', 'savedViews', 'viewManager',
      'perspective', 'section', 'datumDisplay', 'annotations', 'spinCenter', 'simulate', 'pause', 'analysis'];
    const pressed = ['annotations', 'spinCenter'];
    return `
      <style>
        :host {
          display: flex;
          align-items: center;
          height: 30px;
          padding: 0 2px;
          border: 1px solid #9a9f9f;
          background: #f7f9fb;
        }
        icon-button { --button-width: 24px; margin: 0 1px; }
      </style>
      ${icons.map(icon => `<icon-button icon="${icon}" ${pressed.includes(icon) ? 'pressed' : ''}></icon-button>`).join('')}
    `;
  }
}

// Axonometric view of the part. A model circle of radius 1 maps to the
// ellipse spanned by AXIS_X and AXIS_Y.
const AXIS_X = [253, 0];
const AXIS_Y = [66, -216];
const TOP_LEVEL = [1056, 510];
const MID_LEVEL = [1091, 582];
const LOW_LEVEL = [1114, 627];
const LUG_TOP = [664.5, 582.5];
const LUG_LOW = [687.5, 627.5];

function arc([cx, cy], r, from, to) {
  const points = [];
  for (let i = 0; i <= 60; i++) {
    const t = from + (to - from) * i / 60;
    const x = cx + r * (Math.cos(t) * AXIS_Y[0] - Math.sin(t) * AXIS_X[0]);
    const y = cy + r * (Math.cos(t) * AXIS_Y[1] - Math.sin(t) * AXIS_X[1]);
    points.push(`${x.toFixed(1)},${y.toFixed(1)}`);
  }
  return points.join(' ');
}

class GraphicsView extends BaseElement {
  render() {
    const PI = Math.PI;
    const tangent = 0.455;
    const low = PI - tangent;
    // where the extrusion direction touches the ellipses
    const rim = 2.17;
    const ringOut = 1, ringIn = 0.735, plate = 1.16, lug = 0.42, hole = 0.212;
    return `
      <style>
        :host { display: block; position: relative; flex: 1; min-width: 0; overflow: hidden; background: #fff; }
        svg { display: block; width: 100%; height: 100%; }
        view-toolbar { position: absolute; top: 7px; left: 50%; transform: translateX(-50%); }
        .edge { fill: none; stroke: #22242a; }
        .face { fill: #a9b8ca; }
        .side { fill: #707783; }
        .cut { fill: #535963; }
        .wire { fill: none; stroke: #996633; }
        .tag { font: 14px "Liberation Mono", monospace; fill: #996633; }
        .note { font: 300 20px "Liberation Serif", "Noto Sans CJK SC", serif; fill: #ff0000; }
      </style>
      <svg viewBox="293 169 1050 800">
        <defs>
          <linearGradient id="wall" x1="0" y1=".7" x2="1" y2=".3">
            <stop offset="0" stop-color="#555d68"/><stop offset=".25" stop-color="#585f6a"/>
            <stop offset=".55" stop-color="#666c79"/><stop offset="1" stop-color="#737986"/>
          </linearGradient>
          <linearGradient id="bore" x1="0" y1=".7" x2="1" y2=".3">
            <stop offset="0" stop-color="#535b67"/><stop offset=".35" stop-color="#5e6164"/>
            <stop offset=".6" stop-color="#6d717b"/><stop offset="1" stop-color="#777c82"/>
          </linearGradient>
          <clipPath id="boreClip"><polygon points="${arc(LUG_TOP, hole, 0, 2 * PI)}"/></clipPath>
          <clipPath id="wallClip"><polygon points="${arc(TOP_LEVEL, ringIn, 0, 2.624)} ${arc(LOW_LEVEL, ringIn, 1.703, 0)}"/></clipPath>
          <clipPath id="plateClip"><polygon points="${arc(LUG_TOP, lug, tangent, low)} 893,806 880,414"/></clipPath>
        </defs>

        <polygon points="654,374 1195,374 1038,880 498,880" fill="#f7f3ee"/>
        <polygon points="517,507 1058,507 1117,630 577,630" fill="#f7f3ee"/>
        <polygon points="613,507 1058,507 1117,630 577,630" fill="#efe7e0"/>

        <!-- base plate -->
        <polygon class="side" points="${arc(LUG_TOP, lug, rim, low)} ${arc(MID_LEVEL, plate, low, PI)} ${arc(LOW_LEVEL, plate, PI, low)} ${arc(LUG_LOW, lug, low, rim)}"/>
        <polygon class="face" points="${arc(LUG_TOP, lug, tangent, low)} ${arc(MID_LEVEL, plate, low, PI)} ${arc(MID_LEVEL, ringOut, PI, 1.4)} 880,414"/>
        <polygon points="517,507 900,507 900,583 554,583" fill="#a9b1be" clip-path="url(#plateClip)"/>
        <polyline class="edge" points="880,414 ${arc(LUG_TOP, lug, tangent, low)} ${arc(MID_LEVEL, plate, low, PI)}"/>
        <polyline class="edge" points="${arc(LUG_LOW, lug, rim, low)} ${arc(LOW_LEVEL, plate, low, PI)}"/>
        <path class="edge" d="M593 664L616 709M893 806L916 851"/>
        <polygon points="${arc(LUG_TOP, hole, 0, 2 * PI)}" fill="url(#bore)"/>
        <polygon points="${arc(LUG_LOW, hole, 0, 2 * PI)}" fill="#efe7e0" stroke="#22242a" clip-path="url(#boreClip)"/>
        <polygon class="edge" points="${arc(LUG_TOP, hole, 0, 2 * PI)}"/>

        <!-- ring -->
        <polygon class="side" points="${arc(TOP_LEVEL, ringOut, rim, PI)} ${arc(MID_LEVEL, ringOut, PI, rim)}"/>
        <polyline class="edge" points="${arc(MID_LEVEL, ringOut, rim, PI)}"/>
        <polygon class="face" points="${arc(TOP_LEVEL, ringOut, 0, PI)} ${arc(TOP_LEVEL, ringIn, PI, 0)}"/>
        <polyline class="edge" points="${arc(TOP_LEVEL, ringOut, 0, PI)}"/>
        <polygon points="${arc(TOP_LEVEL, ringIn, 0, 2.624)} ${arc(LOW_LEVEL, ringIn, 1.703, 0)}" fill="url(#wall)"/>
        <polygon points="869,507 1060,507 1060,630 931,630" fill="#6b6348" fill-opacity=".25" clip-path="url(#wallClip)"/>
        <polyline class="edge" points="${arc(TOP_LEVEL, ringIn, 0, PI)}"/>
        <polyline class="edge" points="${arc(LOW_LEVEL, ringIn, 1.703, 0)}"/>

        <!-- section faces, seen through the selected plane -->
        <path class="cut" d="M1122 294L1104 352 1163 468 1191 377 1169 333 1158 366z"/>
        <path class="cut" d="M1007 669L990 726 1024 798 1014 832 1037 878 1065 786z"/>
        <path class="face" d="M1142 333L1169 332 1158 366z"/>
        <path class="edge" d="M1142 333L1169 332"/>
        <polygon points="1133,256 1193,377 1037,881 977,761" fill="#49c358" fill-opacity=".384"/>
        <path class="edge" d="M1122 294L1104 352 1163 468 1191 377 1169 333 1158 366zM1007 669L990 726 1024 798 1014 832 1037 878 1065 786z"/>

        <!-- datum planes and axes -->
        <path class="wire" d="M654.500 374.500H1195.500L1038.500 880.500H498L654.500 374.500M517.500 507.500H1058.500L1117.500 630.500H577.500z"/>
        <path class="wire" stroke-dasharray="8 3 3 3" d="M1054 505L1115 630M661 575L691 635"/>
        <polygon points="1133,256 1193,377 1037,881 977,761" fill="none" stroke="#33cc4d" stroke-width="3"/>

        <!-- spin centre -->
        <path d="M818 569.500H840" stroke="#ff3333"/><circle cx="840" cy="569" r="2" fill="#ff3333"/>
        <path d="M818 569L811 554" stroke="#33ff33"/><circle cx="811" cy="554" r="3" fill="#33ff33"/>
        <path d="M818 569L812 587" stroke="#33ffff"/><circle cx="812" cy="587" r="2.500" fill="#33ffff"/>

        <!-- coordinate system -->
        <path class="wire" d="M1135.500 616v12"/>
        <path d="M1117 627.500h28" stroke="#ff3333"/><path d="M1132 625.500h7v4h-7z" fill="#ff3333"/>
        <path d="M1106 614l8 14M1105 613v6h4z" stroke="#33ff33" fill="#33ff33"/>
        <path d="M1113 633l-5 18" stroke="#33ffff" stroke-width="1.500"/>
        <text class="tag" x="1147" y="625" style="fill:#ff3333">X</text>
        <text class="tag" x="1092" y="603" style="fill:#33ff33">Y</text>
        <text class="tag" x="1095" y="667" style="fill:#33ffff">Z</text>

        <text class="tag" x="1197" y="374">TOP</text>
        <text class="tag" x="518" y="506">FRONT</text>
        <text class="tag" x="687" y="627">A_2</text>
        <text class="tag" x="1116" y="640">PRT_CSYS_DEF</text>
        <text class="tag" x="1038" y="883" style="fill:#33cc4d">RIGHT</text>

        <text class="note" x="338" y="320">但是，先按住鼠标中键让模型稍微往上转动一点，再选择要草绘的平面，</text>
        <text class="note" x="338" y="340">再按快捷键S,视角就是我们正对面看到的效果</text>
      </svg>
      <view-toolbar></view-toolbar>
    `;
  }
}

class StatusBar extends BaseElement {
  render() {
    return `
      <style>
        :host {
          display: flex;
          flex: none;
          align-items: flex-end;
          box-sizing: border-box;
          height: 47px;
          padding: 0 19px 4px 4px;
          border-top: 1px solid #a9b7b6;
          background: #f5f9fa;
        }
        .panes { display: flex; gap: 2px; }
        .sep { width: 1px; height: 24px; background: #b2b8b8; }
        .panes + .sep { margin-left: 8px; }
        .message { display: flex; align-items: center; align-self: flex-start; gap: 1px; margin: 8px auto 0 3px; }
        .message creo-icon { width: 12px; height: 14px; }
        .grip { display: flex; gap: 4px; margin-right: 2px; }
        .find { display: flex; height: 23px; margin-right: 2px; border: 1px solid #c5caca; background: #fafbfb; }
        .find icon-button { border-right: 1px solid #c5caca; }
        .find caret-mark { align-self: center; margin: 0 2px; }
        .count { width: 93px; padding: 0 0 4px 4px; }
        .filter { display: flex; align-items: center; width: 175px; height: 23px; border: 1px solid #c5caca; background: #fafbfb; }
        select { flex: 1; height: 23px; padding: 0 7px; border: 0; border-right: 1px solid #c5caca; appearance: none; background: none; color: inherit; font: inherit; }
        .filter caret-mark { margin: 0 3px; }
      </style>
      <div class="panes">
        <icon-button icon="navPane" pressed></icon-button>
        <icon-button icon="browser"></icon-button>
        <icon-button icon="fullScreen"></icon-button>
      </div>
      <div class="sep"></div>
      <div class="message"><creo-icon name="message"></creo-icon>确认退出。</div>
      <div class="grip"><div class="sep"></div><div class="sep"></div></div>
      <div class="find"><icon-button icon="binoculars"></icon-button><caret-mark></caret-mark></div>
      <div class="sep"></div>
      <span class="count">选择了 1 项</span>
      <div class="filter">
        <select aria-label="选择过滤器"><option>几何</option></select>
        <caret-mark></caret-mark>
      </div>
    `;
  }
}

class ForumMark extends BaseElement {
  render() {
    return `
      <style>
        :host { display: block; position: absolute; right: 18px; bottom: 9px; width: 167px; pointer-events: none; }
        .name { display: flex; font: italic 400 41px/44px "Noto Sans CJK SC", sans-serif; color: #000; }
        .name b { font-weight: 400; color: #ff6633; }
        .url { font: italic 15px/16px Inter, "DejaVu Sans", sans-serif; color: #8f9494; }
        svg { position: absolute; left: 60px; top: -15px; width: 24px; height: 44px; }
      </style>
      <div class="name"><b>野火</b>论坛</div>
      <div class="url">www.proewildfire.cn</div>
      <svg viewBox="0 0 24 44" aria-hidden="true"><path d="M8 0Q20 10 20 24 19 38 8 42L3 40Q12 32 12 22 12 14 4 9 10 11 13 16 14 8 8 0z" fill="#ff6633"/></svg>
    `;
  }
}

class CreoApp extends BaseElement {
  render() {
    return `
      <style>
        :host { display: flex; flex-direction: column; position: relative; height: 100vh; overflow: hidden; }
        main { display: flex; flex: 1; min-height: 0; }
        aside {
          display: flex;
          flex: none;
          flex-direction: column;
          box-sizing: border-box;
          width: 293px;
          border-right: 2px solid #dae0df;
          background: #f7f9fb;
        }
        .strip {
          flex: none;
          box-sizing: border-box;
          height: 9px;
          border-top: 3px solid #9c9f9f;
          background: linear-gradient(#475660 3px, #cfe0ea 3px);
        }
        .behind {
          position: absolute;
          right: 0;
          bottom: 30px;
          width: 4px;
          height: 139px;
          border-radius: 4px 0 0 4px;
          background: #a8abac;
        }
      </style>
      <title-bar></title-bar>
      <menu-tabs></menu-tabs>
      <creo-ribbon></creo-ribbon>
      <main>
        <aside>
          <model-tree></model-tree>
          <layer-tree></layer-tree>
        </aside>
        <graphics-view></graphics-view>
      </main>
      <status-bar></status-bar>
      <div class="strip"></div>
      <div class="behind"></div>
      <forum-mark></forum-mark>
    `;
  }
}

customElements.define('creo-icon', CreoIcon);
customElements.define('caret-mark', CaretMark);
customElements.define('icon-button', IconButton);
customElements.define('ribbon-button', RibbonButton);
customElements.define('ribbon-column', RibbonColumn);
customElements.define('ribbon-group', RibbonGroup);
customElements.define('creo-ribbon', CreoRibbon);
customElements.define('title-bar', TitleBar);
customElements.define('menu-tabs', MenuTabs);
customElements.define('tree-item', TreeItem);
customElements.define('model-tree', ModelTree);
customElements.define('layer-tree', LayerTree);
customElements.define('view-toolbar', ViewToolbar);
customElements.define('graphics-view', GraphicsView);
customElements.define('status-bar', StatusBar);
customElements.define('forum-mark', ForumMark);
customElements.define('creo-app', CreoApp);
</script>
</body>
</html>
